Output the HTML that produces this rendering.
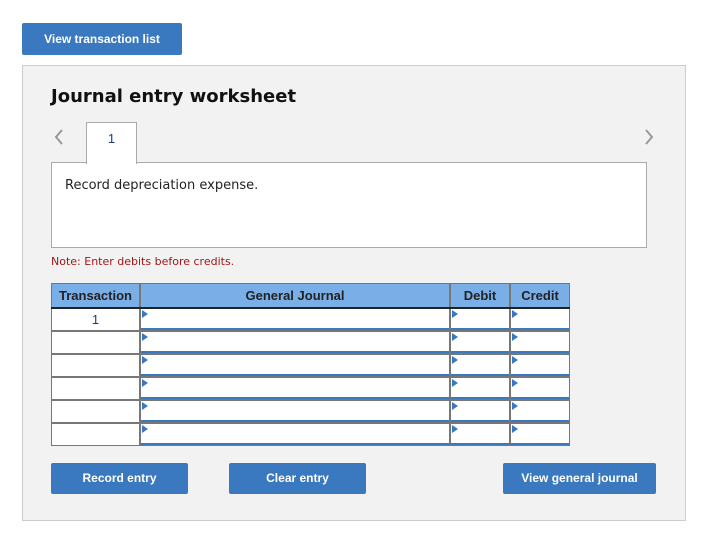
<!DOCTYPE html><html><head><style>
body{margin:0;width:726px;height:553px;background:#fff;font-family:"Liberation Sans",sans-serif;position:relative;overflow:hidden}
.a{position:absolute}
.btn{position:absolute;background:#3a78c0;color:#fff;font-weight:bold;font-size:12px;text-align:center;border-radius:2px}
.c{position:absolute;box-sizing:border-box;background:#fff}
.tri{position:absolute;left:1px;top:1px;width:0;height:0;border-top:4px solid transparent;border-bottom:4px solid transparent;border-left:6px solid #3a78c0}
</style></head><body>
<div class="btn" style="left:22px;top:23px;width:160px;height:32px;line-height:32px">View transaction list</div>
<div class="a" style="left:22px;top:65px;width:662px;height:454px;background:#f2f2f2;border:1px solid #ccc"></div>
<div class="a" style="left:51px;top:86px;font-family:'DejaVu Sans',sans-serif;font-weight:bold;font-size:18px;color:#111">Journal entry worksheet</div>
<svg class="a" style="left:52px;top:128px" width="14" height="18"><path d="M10 2 L4 9 L10 16" fill="none" stroke="#999" stroke-width="2"/></svg>
<svg class="a" style="left:642px;top:128px" width="14" height="18"><path d="M4 2 L10 9 L4 16" fill="none" stroke="#999" stroke-width="2"/></svg>
<div class="a" style="left:51px;top:162px;width:594px;height:84px;background:#fff;border:1px solid #aaa"></div>
<div class="a" style="left:86px;top:122px;width:49px;height:41px;background:#fff;border:1px solid #aaa;border-bottom:none;text-align:center;line-height:32px;font-size:13px;color:#1a3a80">1</div>
<div class="a" style="left:65px;top:178px;font-family:'DejaVu Sans',sans-serif;font-size:13px;color:#222">Record depreciation expense.</div>
<div class="a" style="left:51px;top:255px;font-family:'DejaVu Sans',sans-serif;font-size:11px;color:#a01818">Note: Enter debits before credits.</div>
<div class="a" style="left:51px;top:283px;width:519px;height:163px;background:#777"></div>
<div class="a" style="left:52px;top:284px;width:87px;height:24px;background:#7aaee6;text-align:center;line-height:24px;font-weight:bold;font-size:13px;color:#222">Transaction</div>
<div class="a" style="left:141px;top:284px;width:308px;height:24px;background:#7aaee6;text-align:center;line-height:24px;font-weight:bold;font-size:13px;color:#222">General Journal</div>
<div class="a" style="left:451px;top:284px;width:58px;height:24px;background:#7aaee6;text-align:center;line-height:24px;font-weight:bold;font-size:13px;color:#222">Debit</div>
<div class="a" style="left:511px;top:284px;width:58px;height:24px;background:#7aaee6;text-align:center;line-height:24px;font-weight:bold;font-size:13px;color:#222">Credit</div>
<div class="a" style="left:51px;top:307px;width:519px;height:2px;background:#222"></div>
<div id="rows"></div>
<script>
var h='';for(var i=0;i<6;i++){var y=309+i*23;
h+='<div class="c" style="left:52px;top:'+y+'px;width:87px;height:21px;text-align:center;font-size:13px;line-height:21px;color:#1a3a80">'+(i==0?'1':'')+'</div>';
[[141,308],[451,58],[511,58]].forEach(function(c){h+='<div class="c" style="left:'+c[0]+'px;top:'+y+'px;width:'+c[1]+'px;height:21px;border-bottom:2px solid #3a78c0"><div class="tri"></div></div>';});}
document.getElementById('rows').innerHTML=h;
</script>
<div class="btn" style="left:51px;top:463px;width:137px;height:31px;line-height:31px">Record entry</div>
<div class="btn" style="left:229px;top:463px;width:137px;height:31px;line-height:31px">Clear entry</div>
<div class="btn" style="left:503px;top:463px;width:153px;height:31px;line-height:31px">View general journal</div>
</body></html>
